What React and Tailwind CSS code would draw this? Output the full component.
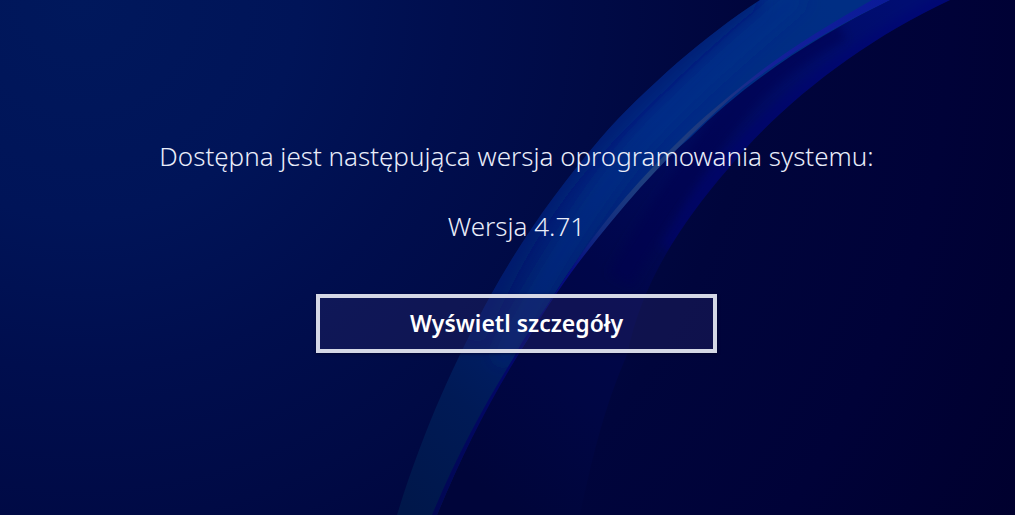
function WaveBackground() {
  return (
    <svg
      className="absolute inset-0 h-full w-full"
      viewBox="0 0 1015 515"
      preserveAspectRatio="none"
      aria-hidden="true"
    >
      <defs>
        <radialGradient id="base" gradientUnits="userSpaceOnUse" cx="80" cy="0" r="1090">
          <stop offset="0" stopColor="#00185c" />
          <stop offset="0.2" stopColor="#001458" />
          <stop offset="0.34" stopColor="#000e4e" />
          <stop offset="0.48" stopColor="#000a45" />
          <stop offset="0.62" stopColor="#00053c" />
          <stop offset="0.8" stopColor="#000238" />
          <stop offset="1" stopColor="#00002d" />
        </radialGradient>
        <linearGradient id="ribbon" gradientUnits="userSpaceOnUse" x1="830" y1="0" x2="410" y2="515">
          <stop offset="0" stopColor="#002e84" />
          <stop offset="0.3" stopColor="#002a84" />
          <stop offset="0.55" stopColor="#002274" />
          <stop offset="0.7" stopColor="#001e66" />
          <stop offset="0.82" stopColor="#001a56" />
          <stop offset="1" stopColor="#00174a" />
        </linearGradient>
        <linearGradient id="edge" gradientUnits="userSpaceOnUse" x1="890" y1="0" x2="430" y2="515">
          <stop offset="0" stopColor="#0a1a98" />
          <stop offset="0.18" stopColor="#14209a" />
          <stop offset="0.28" stopColor="#1e3880" />
          <stop offset="0.42" stopColor="#1f407f" />
          <stop offset="0.53" stopColor="#122c80" />
          <stop offset="0.6" stopColor="#060d82" />
          <stop offset="0.75" stopColor="#02076a" />
          <stop offset="1" stopColor="#010752" />
        </linearGradient>
        <linearGradient id="fold" gradientUnits="userSpaceOnUse" x1="900" y1="0" x2="520" y2="515">
          <stop offset="0" stopColor="#000d72" />
          <stop offset="0.25" stopColor="#000b62" />
          <stop offset="0.45" stopColor="#000856" />
          <stop offset="0.62" stopColor="#00064a" />
          <stop offset="0.8" stopColor="#000644" />
          <stop offset="1" stopColor="#00053a" />
        </linearGradient>
        <filter id="soft" x="-30%" y="-30%" width="160%" height="160%">
          <feGaussianBlur stdDeviation="9" />
        </filter>
        <filter id="softer" x="-30%" y="-30%" width="160%" height="160%">
          <feGaussianBlur stdDeviation="5" />
        </filter>
        <clipPath id="ribbonShape">
          <path d="M760 0C732 18 704 40 677 63C649 88 623 112 600 139C558 188 522 239 492 293C455 360 424 428 397 515H437C463 452 492 393 528 339C570 262 624 192 690 138C748 80 815 37 890 0Z" />
        </clipPath>
        <clipPath id="foldShape">
          <path d="M890 0C815 37 748 80 690 138C624 192 570 262 528 339C492 393 463 452 437 515H580C593 455 604 408 627 355C642 282 680 225 727 170C780 105 860 42 950 0Z" />
        </clipPath>
      </defs>

      <rect width="1015" height="515" fill="url(#base)" />
      <g clipPath="url(#foldShape)">
        <rect width="1015" height="515" fill="url(#fold)" />
        <path
          d="M840 28C765 68 735 105 705 150S650 225 620 280"
          fill="none"
          stroke="#000450"
          strokeWidth="26"
          strokeOpacity="0.55"
          filter="url(#softer)"
        />
        <path
          d="M960 -4C880 34 810 82 757 132S690 215 668 250"
          fill="none"
          stroke="#000e78"
          strokeWidth="18"
          strokeOpacity="0.45"
          filter="url(#softer)"
        />
      </g>
      <g clipPath="url(#ribbonShape)">
        <rect width="1015" height="515" fill="url(#ribbon)" />
        <path
          d="M753 -5C715 24 604 125 560 183S495 290 470 340"
          fill="none"
          stroke="#00176c"
          strokeWidth="26"
          strokeOpacity="0.6"
          filter="url(#soft)"
        />
        <path
          d="M800 -5C740 45 690 90 650 132S560 250 500 360"
          fill="none"
          stroke="#003390"
          strokeWidth="14"
          strokeOpacity="0.5"
          filter="url(#soft)"
        />
      </g>
      <path
        d="M872 0C830 24 790 48 753 77C728 97 703 117 680 140C630 188 592 235 557 290C540 318 526 333 514 357C480 412 455 460 432 515H437C463 452 492 396 528 339C562 280 599 235 640 188C674 151 708 117 743 88C788 54 830 29 890 0Z"
        fill="url(#edge)"
      />
    </svg>
  );
}

export default function App() {
  return (
    <main className="relative flex min-h-screen flex-col items-center overflow-hidden bg-[#000743] pt-[138px] pl-[18px] font-['Noto_Sans','Open_Sans',sans-serif] text-[#e9edfa]">
      <WaveBackground />
      <h1 className="relative text-center text-[26px] leading-9 font-light">
        Dostępna jest następująca wersja oprogramowania systemu:
      </h1>
      <p className="relative mt-[34px] text-center text-[26px] leading-9 font-light">
        Wersja 4.71
      </p>
      <button
        type="button"
        className="relative mt-[50px] w-full max-w-[401px] border-4 border-[#d5d8e6] bg-[#2c2c6c]/35 pt-[7px] pb-2 text-[23px] leading-9 font-semibold text-white shadow-[0_1px_3px_rgba(0,0,30,0.6)]"
      >
        Wyświetl szczegóły
      </button>
    </main>
  );
}
